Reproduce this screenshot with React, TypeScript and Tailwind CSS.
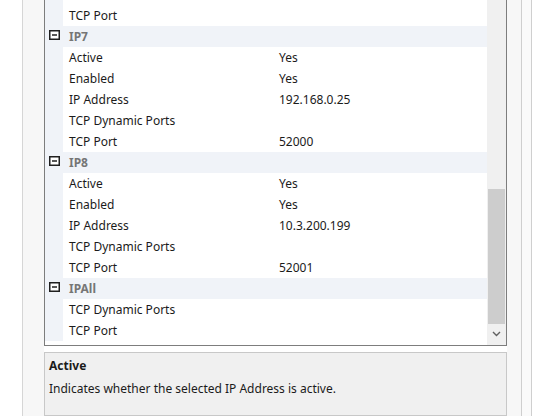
import React from 'react';

type Row = { kind: 'cat'; name: string } | { kind: 'prop'; name: string; value?: string };

const rows: Row[] = [
  { kind: 'prop', name: 'Enabled', value: 'Yes' },
  { kind: 'prop', name: 'TCP Port' },
  { kind: 'cat', name: 'IP7' },
  { kind: 'prop', name: 'Active', value: 'Yes' },
  { kind: 'prop', name: 'Enabled', value: 'Yes' },
  { kind: 'prop', name: 'IP Address', value: '192.168.0.25' },
  { kind: 'prop', name: 'TCP Dynamic Ports' },
  { kind: 'prop', name: 'TCP Port', value: '52000' },
  { kind: 'cat', name: 'IP8' },
  { kind: 'prop', name: 'Active', value: 'Yes' },
  { kind: 'prop', name: 'Enabled', value: 'Yes' },
  { kind: 'prop', name: 'IP Address', value: '10.3.200.199' },
  { kind: 'prop', name: 'TCP Dynamic Ports' },
  { kind: 'prop', name: 'TCP Port', value: '52001' },
  { kind: 'cat', name: 'IPAll' },
  { kind: 'prop', name: 'TCP Dynamic Ports' },
  { kind: 'prop', name: 'TCP Port' },
];

const MinusBox: React.FC = () => (
  <svg width="11" height="10" viewBox="0 0 11 10" className="mt-[-4px]">
    <rect x="0.75" y="0.75" width="9.5" height="8.5" fill="#fff" stroke="#1f1f1f" strokeWidth="1.5" />
    <line x1="3" y1="5" x2="8" y2="5" stroke="#1f1f1f" strokeWidth="1.5" />
  </svg>
);

const GridRow: React.FC<{ row: Row }> = ({ row }) => {
  if (row.kind === 'cat') {
    return (
      <div className="flex h-[21px] items-center bg-[#f0f3f8]">
        <div className="flex w-[18px] shrink-0 justify-end pr-[3px]">
          <MinusBox />
        </div>
        <div className="pl-[6px] font-bold text-[#767676]">{row.name}</div>
      </div>
    );
  }
  return (
    <div className="flex h-[21px] items-center">
      <div className="h-full w-[18px] shrink-0 bg-[#f0f3f8]" />
      <div className="w-[216px] shrink-0 bg-white pl-[6px] text-[#1b1b1b]">{row.name}</div>
      <div className="flex-1 text-[#1b1b1b]">{row.value ?? ''}</div>
    </div>
  );
};

export default function App() {
  return (
    <div
      className="flex h-[416px] w-[540px] overflow-hidden bg-white text-[12px]"
      style={{ fontFamily: '"Noto Sans", "Open Sans", sans-serif' }}
    >
      <div className="w-[22px] shrink-0 bg-white" />
      <div className="w-px shrink-0 bg-[#d6d6d6]" />
      <div className="w-[21px] shrink-0 bg-[#f7f7f7]" />
      <div className="flex w-[463px] shrink-0 flex-col">
        <div className="flex h-[346px] shrink-0 border-x border-b border-[#7d7d7d] bg-white">
          <div className="flex-1 overflow-hidden">
            <div className="-mt-[16px]">
              {rows.map((r, i) => (
                <GridRow key={i} row={r} />
              ))}
            </div>
          </div>
          <div className="flex w-[19px] shrink-0 flex-col bg-[#f0f0f0]">
            <div className="h-[189px]" />
            <div className="mx-[1px] h-[135px] bg-[#cdcdcd]" />
            <div className="flex flex-1 items-center justify-center pb-[1px]">
              <svg width="9" height="6" viewBox="0 0 9 6">
                <path d="M1 1 L4.5 4.5 L8 1" fill="none" stroke="#606060" strokeWidth="1.4" />
              </svg>
            </div>
          </div>
        </div>
        <div className="mt-[6px] flex-1 border border-[#c8c8c8] bg-[#f0f0f0] px-[4px] pt-[4px] text-[#1b1b1b]">
          <div className="font-bold">Active</div>
          <div className="mt-[5px]">Indicates whether the selected IP Address is active.</div>
        </div>
      </div>
      <div className="w-[14px] shrink-0 bg-[#f7f7f7]" />
      <div className="w-px shrink-0 bg-[#cfcfcf]" />
      <div className="w-[9px] shrink-0 bg-[#fafafa]" />
      <div className="w-px shrink-0 bg-[#cfcfcf]" />
      <div className="flex-1 bg-white" />
    </div>
  );
}
